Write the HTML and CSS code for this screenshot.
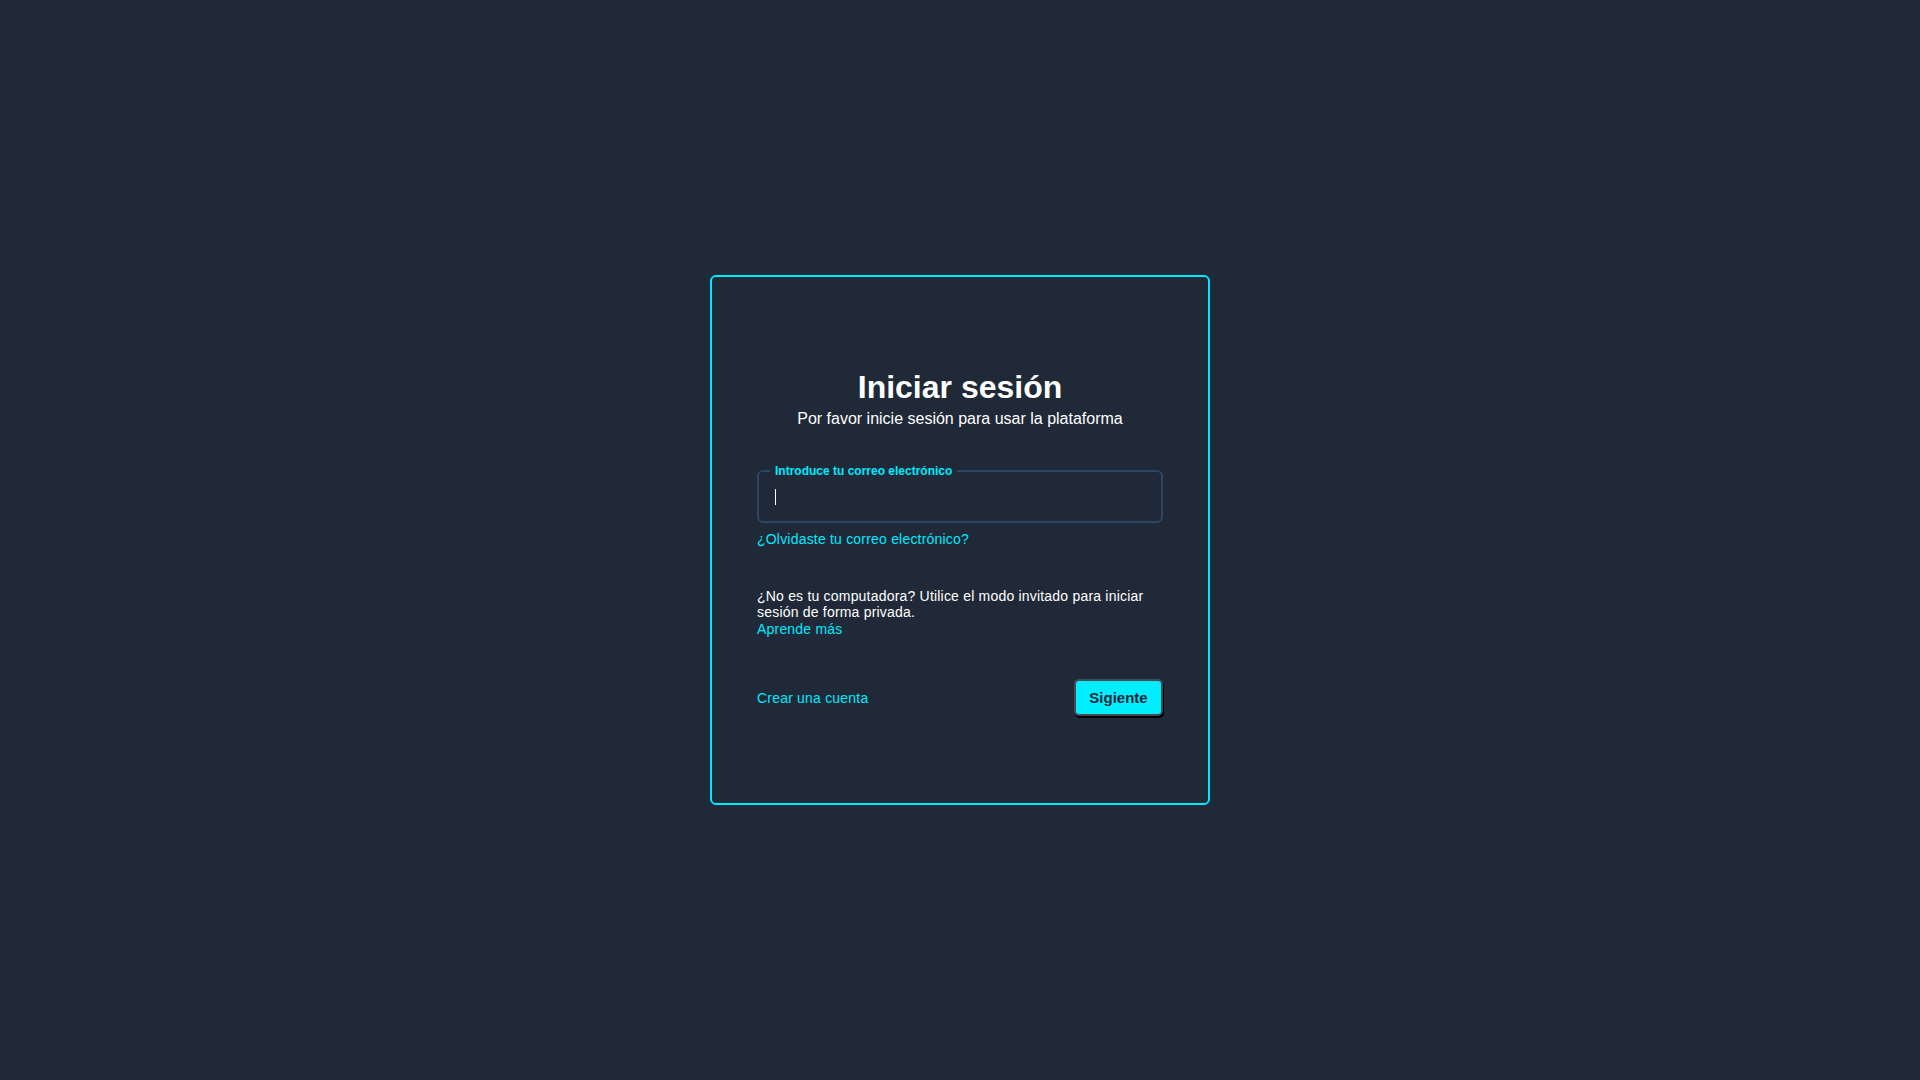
FILE: index.html
```html
<!DOCTYPE html>
<html lang="es">
<head>
<meta charset="utf-8">
<title>Iniciar sesión</title>
<link rel="stylesheet" href="styles.css">
</head>
<body>
<main class="page">
  <section class="card">
    <h1 class="title">Iniciar sesión</h1>
    <p class="subtitle">Por favor inicie sesión para usar la plataforma</p>
    <div class="field">
      <span class="field-label">Introduce tu correo electrónico</span>
      <span class="caret"></span>
    </div>
    <a class="link forgot" href="#">¿Olvidaste tu correo electrónico?</a>
    <p class="note">¿No es tu computadora? Utilice el modo invitado para iniciar sesión de forma privada.</p>
    <a class="link learn" href="#">Aprende más</a>
    <div class="actions">
      <a class="link" href="#">Crear una cuenta</a>
      <button class="btn" type="button">Sigiente</button>
    </div>
  </section>
</main>
</body>
</html>
```
FILE: styles.css
```css
* { box-sizing: border-box; }
html, body { margin: 0; padding: 0; }
body {
  background: #1f2937;
  color: #ffffff;
  font-family: "Liberation Sans", Arial, sans-serif;
}
.page {
  min-height: 100vh;
  display: flex;
  align-items: center;
  justify-content: center;
}
.card {
  width: 500px;
  height: 530px;
  border: 2px solid #00eaff;
  border-radius: 6px;
  padding: 90px 45px 0 45px;
  display: flex;
  flex-direction: column;
  align-items: stretch;
}
.title {
  margin: 0;
  font-size: 32px;
  line-height: 40px;
  font-weight: 700;
  text-align: center;
}
.subtitle {
  margin: 2px 0 0 0;
  font-size: 16px;
  line-height: 20px;
  text-align: center;
}
.field {
  position: relative;
  margin-top: 41px;
  height: 53px;
  border: 2px solid #2c4563;
  border-radius: 6px;
  padding-left: 16px;
  display: flex;
  align-items: center;
}
.field-label {
  position: absolute;
  top: -8px;
  left: 11px;
  padding: 0 5px;
  background: #1f2937;
  color: #00eaff;
  font-size: 12px;
  line-height: 14px;
  font-weight: 700;
  white-space: nowrap;
}
.caret {
  width: 1px;
  height: 16px;
  background: #ffffff;
}
.link {
  color: #00eaff;
  text-decoration: none;
  font-size: 14px;
  line-height: 16px;
  letter-spacing: 0.2px;
}
.forgot {
  align-self: flex-start;
  margin-top: 8px;
}
.note {
  margin: 41px 0 0 0;
  font-size: 14px;
  line-height: 16px;
  letter-spacing: 0.2px;
}
.learn {
  align-self: flex-start;
  margin-top: 1px;
}
.actions {
  margin-top: 42px;
  display: flex;
  align-items: center;
  justify-content: space-between;
}
.btn {
  width: 89px;
  height: 37px;
  background: #00eeff;
  color: #1e2838;
  border: 2px solid #454b55;
  border-radius: 5px;
  box-shadow: 1px 2px 0 #000000;
  font-family: "Liberation Sans", Arial, sans-serif;
  font-size: 15px;
  font-weight: 700;
  padding: 0;
  cursor: pointer;
}
```
